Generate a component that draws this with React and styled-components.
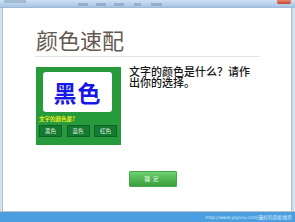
import React from "react";
import styled, { createGlobalStyle } from "styled-components";

const Global = createGlobalStyle`
  html, body { margin: 0; padding: 0; background: #fff; }
  body { font-family: "Noto Sans CJK SC", "Noto Sans", sans-serif; }
  * { box-sizing: border-box; }
`;

const Window = styled.div`
  width: 295px;
  height: 222px;
  display: flex;
  flex-direction: column;
  overflow: hidden;
  background: #fff;
`;

const TitleBar = styled.div`
  height: 8px;
  flex: none;
  display: flex;
  align-items: flex-start;
  background: linear-gradient(#cfe0f2, #b2cdea 70%, #a6c3e3);
  border-bottom: 1px solid #9fb9d6;
`;

const TitleStub = styled.span`
  display: block;
  width: ${(p) => p.$w}px;
  height: 3px;
  margin-left: ${(p) => p.$ml}px;
  margin-top: ${(p) => p.$mt || 0}px;
  background: ${(p) => p.$c || "#7d9cc0"};
  opacity: 0.6;
  filter: blur(0.6px);
`;

const CloseBtn = styled.span`
  display: block;
  margin-left: auto;
  margin-right: 4px;
  width: 14px;
  height: 4px;
  background: linear-gradient(#e8866c, #c9412a);
  border-radius: 0 0 2px 2px;
`;

const Body = styled.div`
  flex: 1;
  display: flex;
`;

const SideBorder = styled.div`
  width: ${(p) => p.$w}px;
  flex: none;
  background: linear-gradient(90deg, #c9d9ea, #dde8f3);
  border-${(p) => (p.$side === "left" ? "right" : "left")}: 1px solid #aebfd1;
`;

const Content = styled.div`
  flex: 1;
  background: #fff;
  padding: 18px 0 0 33px;
  display: flex;
  flex-direction: column;
`;

const Title = styled.h1`
  margin: 0;
  font-size: 22px;
  line-height: 26px;
  font-weight: 400;
  color: #64574f;
  letter-spacing: 0px;
`;

const Separator = styled.div`
  margin: 4px 0 0 -1px;
  width: 225px;
  height: 1px;
  background: #e4e4e4;
`;

const Row = styled.div`
  margin-top: 10px;
  display: flex;
  align-items: flex-start;
  gap: 8px;
`;

const Card = styled.div`
  width: 85px;
  height: 78px;
  background: #279b3b;
  padding: 5px 3px 0 3px;
  display: flex;
  flex-direction: column;
`;

const WordBox = styled.div`
  width: 69px;
  height: 40px;
  margin-left: 4px;
  background: #fff;
  border-radius: 3px;
  display: flex;
  align-items: center;
  justify-content: center;
  font-size: 23px;
  font-weight: 700;
  color: ${(p) => p.$color};
  letter-spacing: 1px;
`;

const Prompt = styled.div`
  margin: 4px 0 0 0;
  font-size: 5.5px;
  line-height: 6px;
  font-weight: 700;
  color: #ecec1a;
`;

const Choices = styled.div`
  margin-top: 3px;
  display: flex;
  gap: 4.5px;
`;

const Choice = styled.div`
  width: 23px;
  height: 12px;
  background: #157a31;
  border: 1px solid #0f6326;
  display: flex;
  align-items: center;
  justify-content: center;
  font-size: 5.5px;
  color: #e8f5e8;
`;

const Question = styled.p`
  margin: -1px 0 0 0;
  width: 122px;
  font-size: 11px;
  line-height: 11px;
  color: #161616;
  font-weight: 500;
`;

const ConfirmButton = styled.div`
  margin: 26px 0 0 93px;
  width: 48px;
  height: 16px;
  background: linear-gradient(#70d070, #4db44f 55%, #3c9f3f);
  border: 1px solid #47a847;
  border-radius: 1px;
  display: flex;
  align-items: center;
  justify-content: center;
  font-size: 5.5px;
  color: #f4fff4;
  letter-spacing: 3px;
`;

const BottomLine = styled.div`
  height: 1px;
  flex: none;
  background: #b9c3cd;
`;

const StatusBar = styled.div`
  height: 10px;
  flex: none;
  background: #4b9fe1;
  display: flex;
  align-items: center;
  justify-content: flex-end;
  padding-right: 3px;
  font-family: "DejaVu Sans", "Noto Sans CJK SC", sans-serif;
  font-size: 4.5px;
  color: #dbeefc;
  white-space: nowrap;
`;

export default function App() {
  return (
    <Window>
      <Global />
      <TitleBar>
        <TitleStub $w={22} $ml={4} $mt={0} $c="#8aa6c6" />
        <TitleStub $w={10} $ml={52} $mt={3} />
        <TitleStub $w={10} $ml={8} $mt={3} />
        <TitleStub $w={10} $ml={8} $mt={3} />
        <TitleStub $w={7} $ml={10} $mt={3} />
        <TitleStub $w={11} $ml={10} $mt={3} />
        <CloseBtn />
      </TitleBar>
      <Body>
        <SideBorder $w={3} $side="left" />
        <Content>
          <Title>颜色速配</Title>
          <Separator />
          <Row>
            <Card>
              <WordBox $color="#1717e8">黑色</WordBox>
              <Prompt>文字的颜色是?</Prompt>
              <Choices>
                <Choice>黑色</Choice>
                <Choice>蓝色</Choice>
                <Choice>红色</Choice>
              </Choices>
            </Card>
            <Question>文字的颜色是什么？请作出你的选择。</Question>
          </Row>
          <ConfirmButton>确定</ConfirmButton>
        </Content>
        <SideBorder $w={4} $side="right" />
      </Body>
      <BottomLine />
      <StatusBar>http://www.yojocu.com[最好的游戏]推荐</StatusBar>
    </Window>
  );
}
